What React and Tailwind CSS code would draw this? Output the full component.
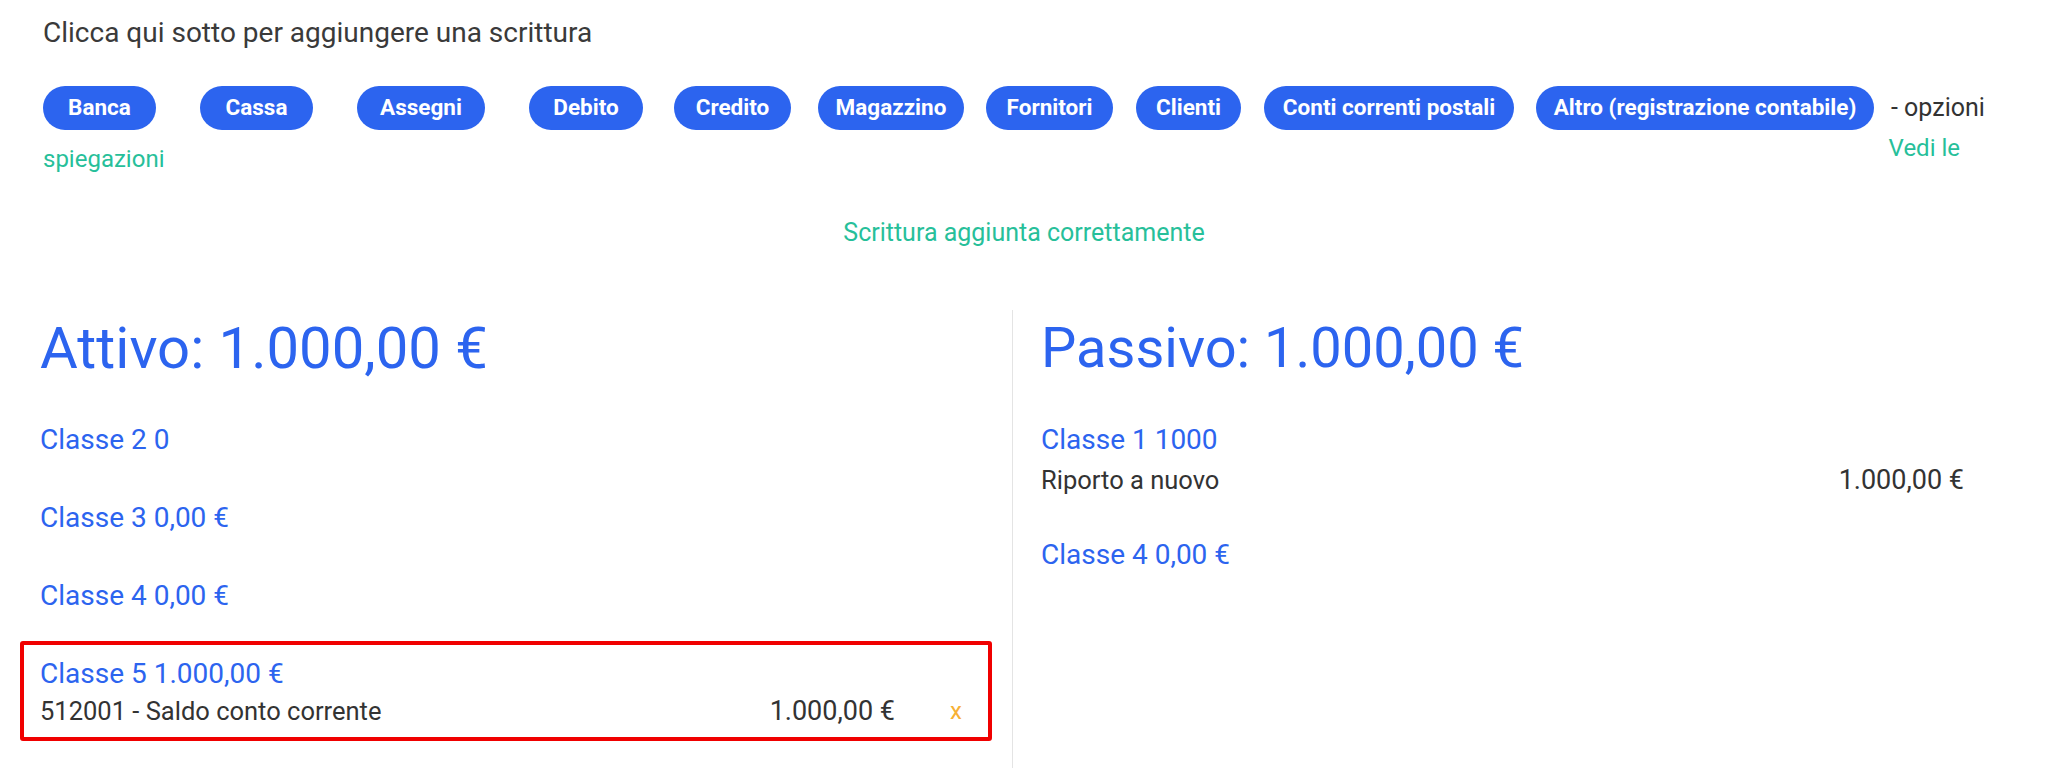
import React from "react";

const BUTTONS = [
  { label: "Banca", width: "w-[113px]", gap: "ml-0" },
  { label: "Cassa", width: "w-[113px]", gap: "ml-[44px]" },
  { label: "Assegni", width: "w-[128px]", gap: "ml-[44px]" },
  { label: "Debito", width: "w-[114px]", gap: "ml-[44px]" },
  { label: "Credito", width: "w-[117px]", gap: "ml-[31px]" },
  { label: "Magazzino", width: "w-[146px]", gap: "ml-[27px]" },
  { label: "Fornitori", width: "w-[127px]", gap: "ml-[22px]" },
  { label: "Clienti", width: "w-[105px]", gap: "ml-[23px]" },
  { label: "Conti correnti postali", width: "w-[250px]", gap: "ml-[23px]" },
  { label: "Altro (registrazione contabile)", width: "w-[338px]", gap: "ml-[22px]" },
];

const ATTIVO = [
  { title: "Classe 2 0", rows: [] },
  { title: "Classe 3 0,00 €", rows: [] },
  { title: "Classe 4 0,00 €", rows: [] },
  {
    title: "Classe 5 1.000,00 €",
    rows: [{ label: "512001 - Saldo conto corrente", amount: "1.000,00 €" }],
    highlighted: true,
  },
];

const PASSIVO = [
  { title: "Classe 1 1000", rows: [{ label: "Riporto a nuovo", amount: "1.000,00 €" }] },
  { title: "Classe 4 0,00 €", rows: [] },
];

function ClassBlock({ block, removable }) {
  return (
    <div
      className={`rounded-[3px] border-4 px-4 pt-[9px] pb-[9px] ${
        block.highlighted ? "border-[#f00000]" : "border-transparent"
      }`}
    >
      <p className="text-[28px] leading-[40px] text-[#2c64ef]">{block.title}</p>
      {block.rows.map((row) => (
        <div
          key={row.label}
          className={`flex items-center text-[25.5px] leading-[34px] text-[#333] ${
            removable ? "pt-0" : "pt-[3px]"
          }`}
        >
          <span className="flex-1">{row.label}</span>
          <span className="text-[27px]">{row.amount}</span>
          {removable ? (
            <span className="w-[77px] pl-[55px] text-[24px] text-[#f7b135]">x</span>
          ) : null}
        </div>
      ))}
    </div>
  );
}

export default function App() {
  return (
    <div className="min-h-[768px] bg-white font-['Roboto',sans-serif] text-[#333]">
      <section className="px-[43px] pt-[13px]">
        <p className="text-[28px] leading-[40px] text-[#3a3a3a]">
          Clicca qui sotto per aggiungere una scrittura
        </p>

        <div className="mt-[33px] flex items-center">
          {BUTTONS.map((button) => (
            <button
              key={button.label}
              type="button"
              className={`${button.gap} ${button.width} h-[44px] shrink-0 rounded-full bg-[#2c64ef] text-center text-[22.5px] font-bold text-white`}
            >
              {button.label}
            </button>
          ))}
          <span className="ml-[17px] text-[25px] leading-[40px] text-[#333]">- opzioni</span>
        </div>

        <div className="mt-[2px] flex items-start justify-between pr-[45px]">
          <span className="pt-[11px] text-[24px] leading-[32px] text-[#27bf9a]">spiegazioni</span>
          <span className="text-[24px] leading-[32px] text-[#27bf9a]">Vedi le</span>
        </div>

        <p className="mt-[42px] text-center text-[25px] leading-[32px] text-[#27bf9a]">
          Scrittura aggiunta correttamente
        </p>
      </section>

      <section className="mt-[61px] flex">
        <div className="w-[1013px] shrink-0 border-r border-[#e4e4e4] px-[20px] pb-[28px]">
          <h2 className="pt-[3px] pl-[20px] text-[58px] leading-[70px] text-[#2c64ef]">
            Attivo: 1.000,00 €
          </h2>
          <div className="mt-[24px] space-y-[12px]">
            {ATTIVO.map((block) => (
              <ClassBlock key={block.title} block={block} removable />
            ))}
          </div>
        </div>

        <div className="flex-1 pl-[8px] pr-[64px]">
          <h2 className="pt-[3px] pl-[20px] text-[56px] leading-[70px] text-[#2c64ef]">
            Passivo: 1.000,00 €
          </h2>
          <div className="mt-[24px] space-y-[12px]">
            {PASSIVO.map((block) => (
              <ClassBlock key={block.title} block={block} />
            ))}
          </div>
        </div>
      </section>
    </div>
  );
}
